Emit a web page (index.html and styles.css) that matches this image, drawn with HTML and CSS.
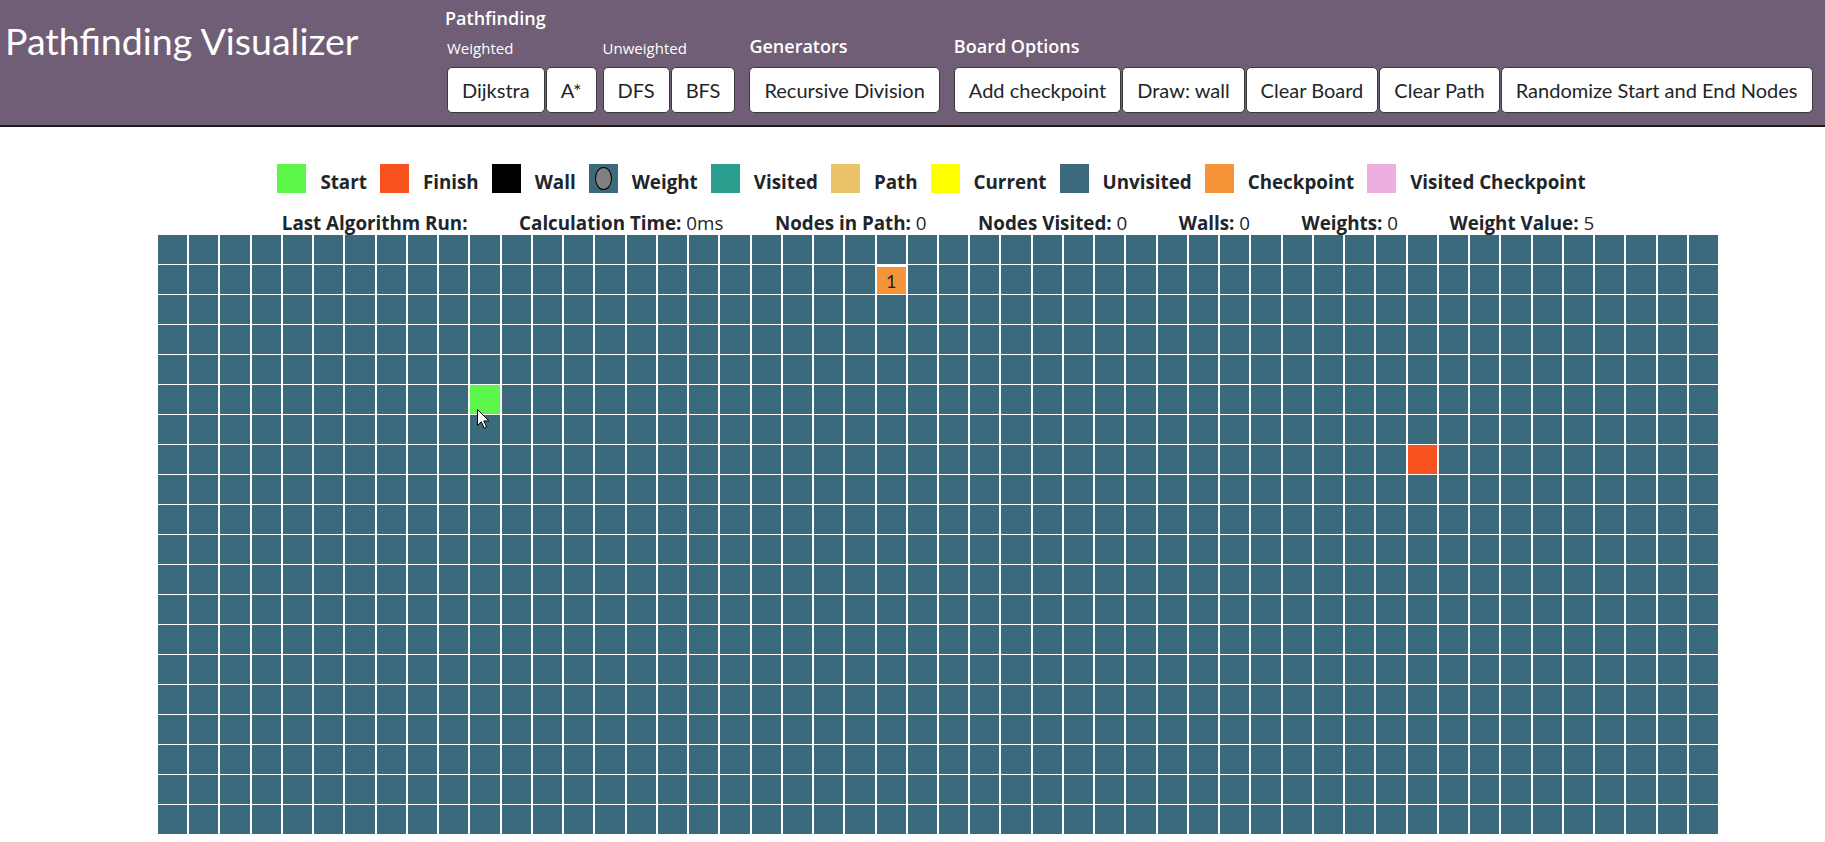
FILE: index.html
```html
<!DOCTYPE html>
<html lang="en">
<head>
<meta charset="utf-8">
<title>Pathfinding Visualizer</title>
<link rel="stylesheet" href="styles.css">
</head>
<body>
<nav class="navbar">
  <div class="brand">Pathfinding Visualizer</div>
  <div class="controls">
    <div class="group">
      <div class="group-title">Pathfinding</div>
      <div class="subgroups">
        <div class="subgroup">
          <div class="sub-title">Weighted</div>
          <div class="btn-row">
            <button class="btn">Dijkstra</button>
            <button class="btn">A*</button>
          </div>
        </div>
        <div class="subgroup">
          <div class="sub-title">Unweighted</div>
          <div class="btn-row">
            <button class="btn">DFS</button>
            <button class="btn">BFS</button>
          </div>
        </div>
      </div>
    </div>
    <div class="group">
      <div class="group-title">Generators</div>
      <div class="btn-row">
        <button class="btn">Recursive Division</button>
      </div>
    </div>
    <div class="group">
      <div class="group-title">Board Options</div>
      <div class="btn-row">
        <button class="btn">Add checkpoint</button>
        <button class="btn">Draw: wall</button>
        <button class="btn">Clear Board</button>
        <button class="btn">Clear Path</button>
        <button class="btn">Randomize Start and End Nodes</button>
      </div>
    </div>
  </div>
</nav>

<main class="board">
  <div class="legend">
    <div class="legend-item"><span class="swatch sw-start"></span><span class="legend-label">Start</span></div>
    <div class="legend-item"><span class="swatch sw-finish"></span><span class="legend-label">Finish</span></div>
    <div class="legend-item"><span class="swatch sw-wall"></span><span class="legend-label">Wall</span></div>
    <div class="legend-item"><span class="swatch sw-weight"><span class="weight-dot"></span></span><span class="legend-label">Weight</span></div>
    <div class="legend-item"><span class="swatch sw-visited"></span><span class="legend-label">Visited</span></div>
    <div class="legend-item"><span class="swatch sw-path"></span><span class="legend-label">Path</span></div>
    <div class="legend-item"><span class="swatch sw-current"></span><span class="legend-label">Current</span></div>
    <div class="legend-item"><span class="swatch sw-unvisited"></span><span class="legend-label">Unvisited</span></div>
    <div class="legend-item"><span class="swatch sw-checkpoint"></span><span class="legend-label">Checkpoint</span></div>
    <div class="legend-item"><span class="swatch sw-vcheckpoint"></span><span class="legend-label">Visited Checkpoint</span></div>
  </div>

  <div class="stats">
    <div class="stat"><b>Last Algorithm Run:</b></div>
    <div class="stat"><b>Calculation Time:</b> 0ms</div>
    <div class="stat"><b>Nodes in Path:</b> 0</div>
    <div class="stat"><b>Nodes Visited:</b> 0</div>
    <div class="stat"><b>Walls:</b> 0</div>
    <div class="stat"><b>Weights:</b> 0</div>
    <div class="stat"><b>Weight Value:</b> 5</div>
  </div>

  <div class="grid" id="grid">
    <svg class="cursor" width="13" height="20" viewBox="0 0 13 20">
      <path d="M0.5 0.5 L0.5 16.5 L4.3 12.8 L7.2 19 L9.6 18 L6.8 11.9 L11.8 11.9 Z" fill="#fff" stroke="#000" stroke-width="1" stroke-linejoin="miter"/>
    </svg>
  </div>
</main>
<script src="app.js"></script>
</body>
</html>
```

FILE: styles.css
```css
html, body {
  margin: 0;
  padding: 0;
  background: #ffffff;
}

body {
  font-family: "Open Sans", "Noto Sans", sans-serif;
  color: #212529;
}

/* ---------- Navbar ---------- */
.navbar {
  display: flex;
  align-items: flex-start;
  height: 125px;
  background: #6f5e76;
  border-bottom: 2px solid #1c1c1c;
}

.brand {
  flex: none;
  width: 440px;
  padding-left: 5px;
  padding-top: 18px;
  font-family: "Lato", "Open Sans", sans-serif;
  font-size: 37.5px;
  line-height: 46px;
  color: #ffffff;
  white-space: nowrap;
}

.controls {
  display: flex;
  flex: none;
  align-self: flex-end;
  align-items: flex-end;
  gap: 14px;
  margin-bottom: 12px;
}

.group {
  display: flex;
  flex-direction: column;
}

.group-title {
  font-size: 18px;
  font-weight: 600;
  line-height: 22px;
  margin-bottom: 10px;
  color: #ffffff;
  white-space: nowrap;
}

.subgroups {
  display: flex;
  gap: 6px;
  padding-left: 2px;
}

.subgroup {
  display: flex;
  flex-direction: column;
}

.sub-title {
  font-size: 15px;
  line-height: 18px;
  margin-bottom: 10px;
  color: #ffffff;
}

.btn-row {
  display: flex;
  gap: 1px;
}

.btn {
  box-sizing: border-box;
  height: 46px;
  font-family: "Lato", "Open Sans", sans-serif;
  font-size: 20px;
  line-height: 30px;
  padding: 7px 14px;
  border: 1px solid #3a3a3a;
  border-radius: 5px;
  background: #ffffff;
  color: #212529;
  white-space: nowrap;
  margin: 0;
}

/* ---------- Board ---------- */
.board {
  width: 1560px;
  margin-left: 158px;
}

.legend {
  display: flex;
  justify-content: center;
  align-items: flex-end;
  margin-top: 37px;
}

.legend-item {
  display: flex;
  align-items: flex-end;
  margin-right: 13px;
}

.swatch {
  display: flex;
  align-items: center;
  justify-content: center;
  width: 29px;
  height: 29px;
  flex: none;
}

.legend-label {
  margin-left: 14px;
  font-size: 18.8px;
  font-weight: 700;
  line-height: 21px;
  color: #212529;
  white-space: nowrap;
}

.sw-start { background: #5cf74a; }
.sw-finish { background: #f8531f; }
.sw-wall { background: #000000; }
.sw-weight { background: #3b6a7d; }
.sw-visited { background: #2a9d8f; }
.sw-path { background: #e9c46a; }
.sw-current { background: #ffff00; }
.sw-unvisited { background: #3b6a7d; }
.sw-checkpoint { background: #f59439; }
.sw-vcheckpoint { background: #ecafdf; }

.weight-dot {
  width: 17px;
  height: 23px;
  box-sizing: border-box;
  border-radius: 50%;
  background: #808080;
  border: 1px solid #000000;
}

.stats {
  display: flex;
  justify-content: center;
  gap: 51.5px;
  margin-top: 19px;
  margin-bottom: 1px;
  font-size: 18.8px;
  line-height: 22px;
  color: #212529;
  white-space: nowrap;
}

.stat b {
  font-weight: 700;
}

.grid {
  position: relative;
  display: grid;
  grid-template-columns: repeat(50, 1fr);
  grid-auto-rows: 29px;
  column-gap: 2px;
  row-gap: 1px;
  background: #ffffff;
}

.cell {
  background: #3b6a7d;
}

.cell.start { background: #5cf74a; }
.cell.finish { background: #f8531f; }

.cell.checkpoint {
  background: #f59439;
  box-shadow: inset 0 2px 0 #ffffff;
  display: flex;
  align-items: center;
  justify-content: center;
  padding-top: 2px;
  box-sizing: border-box;
  font-family: "Lato", "Open Sans", sans-serif;
  font-size: 18px;
  color: #222222;
}

.cursor {
  position: absolute;
  left: 319px;
  top: 174px;
  z-index: 2;
}
```

FILE: app.js
```js
(function () {
  var grid = document.getElementById('grid');
  var ROWS = 20, COLS = 50;
  for (var r = 0; r < ROWS; r++) {
    for (var c = 0; c < COLS; c++) {
      var cell = document.createElement('div');
      cell.className = 'cell';
      if (r === 5 && c === 10) cell.className += ' start';
      if (r === 7 && c === 40) cell.className += ' finish';
      if (r === 1 && c === 23) {
        cell.className += ' checkpoint';
        cell.textContent = '1';
      }
      grid.appendChild(cell);
    }
  }
})();
```
